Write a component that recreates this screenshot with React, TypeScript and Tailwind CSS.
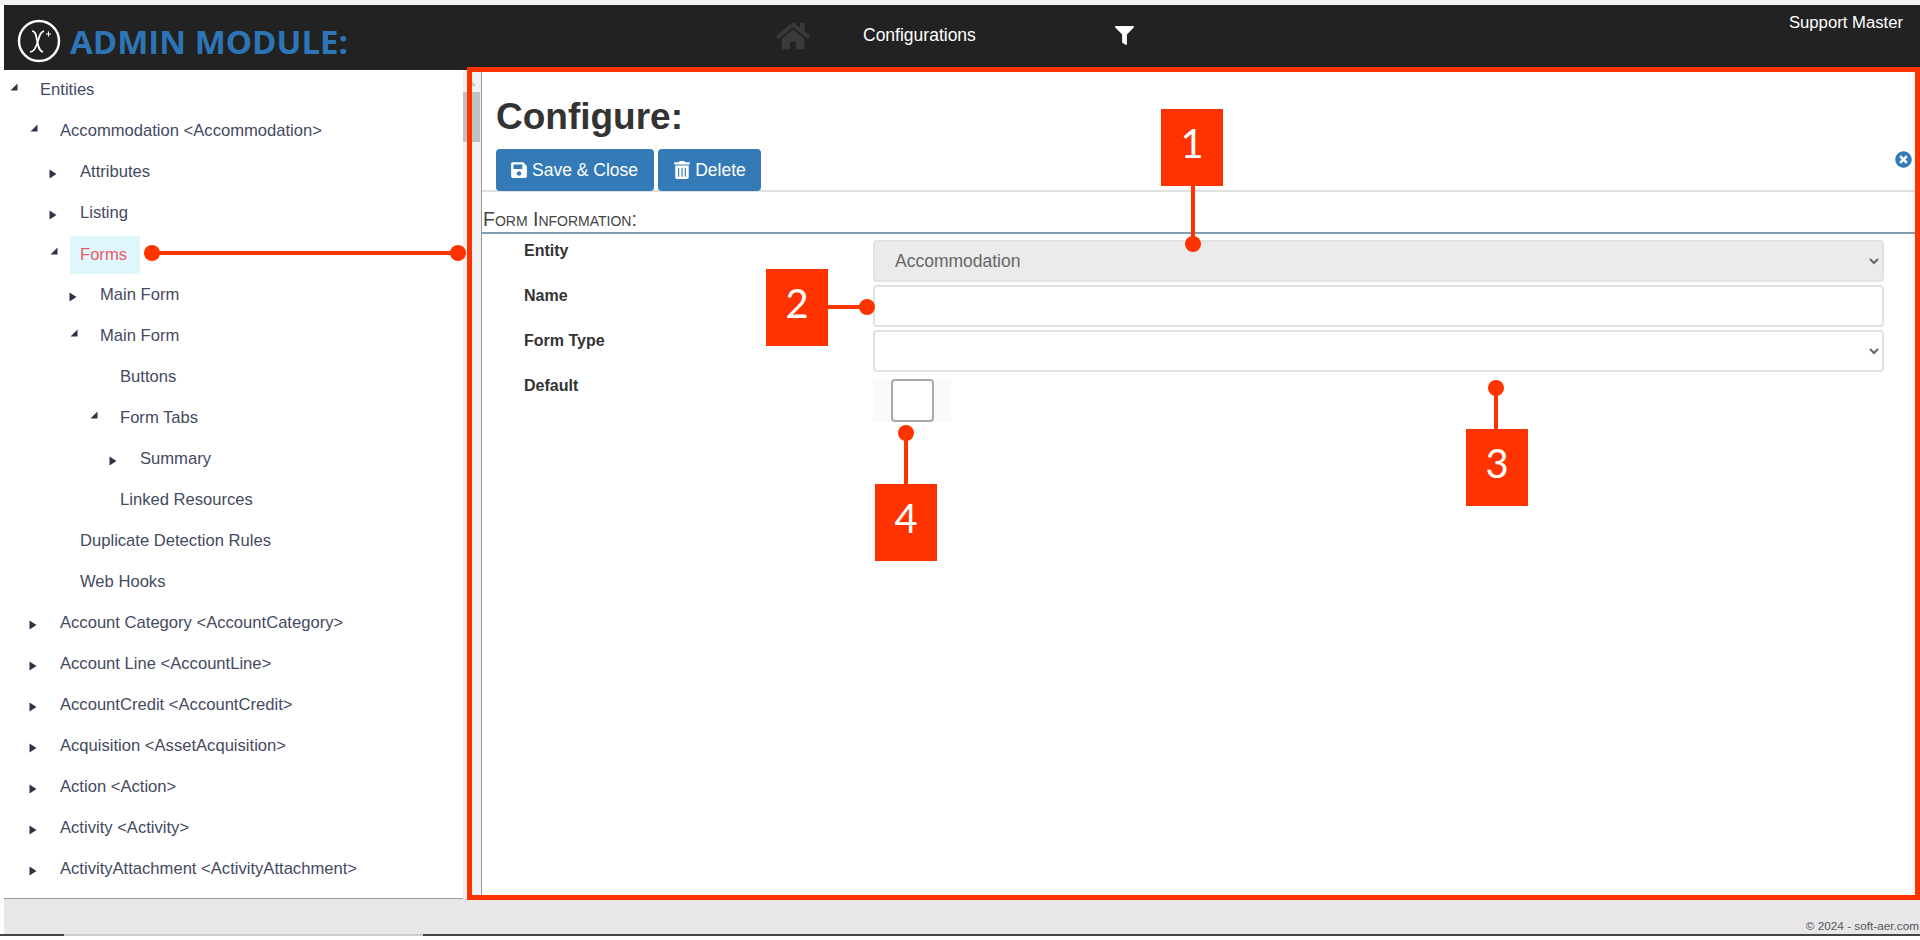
import { FaFilter, FaHome, FaSave, FaTimesCircle, FaTrashAlt } from 'react-icons/fa'

interface TreeRow {
  label: string
  level: number
  arrow?: 'open' | 'closed'
  active?: boolean
}

const rows: TreeRow[] = [
  { label: 'Entities', level: 0, arrow: 'open' },
  { label: 'Accommodation <Accommodation>', level: 1, arrow: 'open' },
  { label: 'Attributes', level: 2, arrow: 'closed' },
  { label: 'Listing', level: 2, arrow: 'closed' },
  { label: 'Forms', level: 2, arrow: 'open', active: true },
  { label: 'Main Form', level: 3, arrow: 'closed' },
  { label: 'Main Form', level: 3, arrow: 'open' },
  { label: 'Buttons', level: 4 },
  { label: 'Form Tabs', level: 4, arrow: 'open' },
  { label: 'Summary', level: 5, arrow: 'closed' },
  { label: 'Linked Resources', level: 4 },
  { label: 'Duplicate Detection Rules', level: 2 },
  { label: 'Web Hooks', level: 2 },
  { label: 'Account Category <AccountCategory>', level: 1, arrow: 'closed' },
  { label: 'Account Line <AccountLine>', level: 1, arrow: 'closed' },
  { label: 'AccountCredit <AccountCredit>', level: 1, arrow: 'closed' },
  { label: 'Acquisition <AssetAcquisition>', level: 1, arrow: 'closed' },
  { label: 'Action <Action>', level: 1, arrow: 'closed' },
  { label: 'Activity <Activity>', level: 1, arrow: 'closed' },
  { label: 'ActivityAttachment <ActivityAttachment>', level: 1, arrow: 'closed' },
]

const levelPadding = ['pl-[6px]', 'pl-[26px]', 'pl-[46px]', 'pl-[66px]', 'pl-[86px]', 'pl-[106px]']

const Logo = () => (
  <svg width="44" height="44" viewBox="0 0 44 44" fill="none" stroke="#fff">
    <circle cx="22" cy="22" r="20" strokeWidth="2.4" />
    <path d="M15 12c3 0 4 3 5 9s2 11 6 12" strokeWidth="1.7" />
    <path d="M13 33c3 0 6-4 8-11s3-9 6-10" strokeWidth="1.7" />
    <path d="M29 15h5M31.5 12.5v5" strokeWidth="1.1" />
  </svg>
)

const Arrow = ({ type }: { type?: 'open' | 'closed' }) => (
  <span className="w-[30px] shrink-0 flex items-center">
    {type === 'open' && (
      <svg width="8" height="8" viewBox="0 0 8 8" className="-mt-[8px]">
        <path d="M7.5 0.5V7.5H0.5Z" fill="#2d3447" />
      </svg>
    )}
    {type === 'closed' && (
      <svg width="8" height="10" viewBox="0 0 8 10" className="mt-[2px] ml-[-1px]">
        <path d="M0.5 0.5L7.5 5L0.5 9.5Z" fill="#2d3447" />
      </svg>
    )}
  </span>
)

const Sidebar = () => (
  <aside className="w-[459px] shrink-0 bg-white border-b border-b-[#999] overflow-hidden">
    {rows.map((row, i) => (
      <div key={i} className={`h-[41px] flex items-center ${levelPadding[row.level]}`}>
        <Arrow type={row.arrow} />
        {row.active ? (
          <span className="-ml-[10px] pl-[10px] pr-[13px] h-[38px] leading-[38px] bg-[#dff6fb] text-[#f0566a]">{row.label}</span>
        ) : (
          <span className="whitespace-nowrap">{row.label}</span>
        )}
      </div>
    ))}
  </aside>
)

const Scrollbar = () => (
  <div className="w-[19px] shrink-0 bg-[#f1f1f1] border-r border-r-[#999] pt-[22px] relative">
    <svg width="8" height="5" viewBox="0 0 8 5" className="absolute left-[5px] top-[11px]">
      <path d="M4 0L8 5H0Z" fill="#c8c8c8" />
    </svg>
    <div className="w-[17px] h-[50px] bg-[#c1c1c1]" />
  </div>
)

const FormRow = ({ label, children }: { label: string; children: React.ReactNode }) => (
  <div className="flex h-[45px]">
    <label className="w-[391px] pl-[42px] font-bold text-[#333] text-[16px] leading-[21px]">{label}</label>
    <div className="w-[1011px]">{children}</div>
  </div>
)

const fieldClass = 'w-full h-[42px] rounded-[4px] border-2 border-[#e2e2e2] px-[16px] text-[17.5px] text-[#666]'

const ConfigPanel = () => (
  <main className="flex-1 min-w-0 bg-white">
    <div className="pl-[14px] pr-[11px] pt-[27px] h-[122px] border-b-2 border-b-[#e0e0e0]">
      <h1 className="text-[37px] font-bold text-[#333] leading-[40px] mb-[12px]">Configure:</h1>
      <div className="flex items-end gap-[4px]">
        <button className="h-[42px] w-[158px] rounded-[4px] bg-[#337ab7] text-white text-[17.5px] flex items-center justify-center gap-[4px] pr-[2px]">
          <FaSave className="text-[18px]" /> Save &amp; Close
        </button>
        <button className="h-[42px] w-[103px] rounded-[4px] bg-[#337ab7] text-white text-[17.5px] flex items-center justify-center gap-[4px]">
          <FaTrashAlt className="text-[18px]" /> Delete
        </button>
        <FaTimesCircle className="ml-auto mb-[23px] mr-[-3px] text-[17px] text-[#337ab7]" />
      </div>
    </div>
    <div className="h-[42px] pl-[1px] pt-[16px] border-b-2 border-b-[#7f9db3] text-[#444] text-[19.5px] leading-[22px] [font-variant:small-caps]">
      Form Information:
    </div>
    <div className="pt-[6px]">
      <FormRow label="Entity">
        <select disabled className={`${fieldClass} bg-[#ebebeb] opacity-100`}>
          <option>Accommodation</option>
        </select>
      </FormRow>
      <FormRow label="Name">
        <input className={fieldClass} />
      </FormRow>
      <FormRow label="Form Type">
        <select className={`${fieldClass} bg-white`}>
          <option></option>
        </select>
      </FormRow>
      <FormRow label="Default">
        <div className="mt-[4px] w-[78px] h-[43px] bg-[#fafafa] flex justify-center">
          <input type="checkbox" className="appearance-none w-[43px] h-[43px] bg-white border-2 border-[#aaa] rounded-[4px]" />
        </div>
      </FormRow>
    </div>
  </main>
)

// 주석 번호 상자
const Callout = ({ n, className }: { n: number; className: string }) => (
  <div className={`absolute w-[62px] h-[77px] pb-[10px] bg-[#ff3300] text-white text-[40px] font-['Lato',sans-serif] flex items-center justify-center ${className}`}>
    {n}
  </div>
)

const Dot = ({ className }: { className: string }) => (
  <div className={`absolute w-[16px] h-[16px] rounded-full bg-[#ff3300] ${className}`} />
)

const Line = ({ className }: { className: string }) => <div className={`absolute bg-[#ff3300] ${className}`} />

export default function App() {
  return (
    <div className="relative w-[1920px] h-[940px] overflow-hidden bg-white text-[16.6px] text-[#444a5f] font-['Liberation_Sans',Arial,sans-serif]">
      <div className="h-[5px] bg-[#f2f2f2]" />
      <div className="flex flex-col h-[929px] pl-[4px]">
        <header className="h-[65px] shrink-0 bg-[#222] flex">
          <div className="flex items-center pl-[13px] w-[770px] pt-[7px]">
            <Logo />
            <span className="ml-[9px] text-[33px] font-bold text-[#2e75b6] leading-none font-['Open_Sans',sans-serif]">ADMIN MODULE:</span>
          </div>
          <FaHome className="mt-[14px] ml-[2px] text-[34px] text-[#3a3a3a]" />
          <span className="ml-[53px] mt-[20px] text-[17.5px] leading-[20px] text-white">Configurations</span>
          <FaFilter className="ml-[139px] mt-[21px] text-[19px] text-white" />
          <span className="ml-auto mr-[17px] mt-[8px] text-[16.7px] leading-[20px] text-white">Support Master</span>
        </header>
        <div className="flex h-[829px] shrink-0">
          <Sidebar />
          <Scrollbar />
          <ConfigPanel />
        </div>
        <footer className="flex-1 bg-[#e8e6e8] flex items-end justify-end pr-[1px] text-[11.75px] leading-[16px] text-[#555]">
          © 2024 - soft-aer.com
        </footer>
      </div>
      <div className="flex h-[2px]">
        <div className="w-[64px] bg-[#444]" />
        <div className="w-[359px] bg-[#ccc]" />
        <div className="flex-1 bg-[#444]" />
      </div>

      {/* 빨간 주석 레이어 */}
      <div className="absolute left-[467px] top-[67px] w-[1453px] h-[833px] border-[5px] border-[#ff3300]" />
      <Dot className="left-[144px] top-[245px]" />
      <Dot className="left-[450px] top-[245px]" />
      <Line className="left-[152px] top-[251px] w-[306px] h-[4px]" />

      <Callout n={1} className="left-[1161px] top-[109px]" />
      <Line className="left-[1191px] top-[186px] w-[4px] h-[57px]" />
      <Dot className="left-[1185px] top-[236px]" />

      <Callout n={2} className="left-[766px] top-[269px]" />
      <Line className="left-[828px] top-[305px] w-[39px] h-[4px]" />
      <Dot className="left-[859px] top-[299px]" />

      <Callout n={3} className="left-[1466px] top-[429px]" />
      <Line className="left-[1494px] top-[388px] w-[4px] h-[41px]" />
      <Dot className="left-[1488px] top-[380px]" />

      <Callout n={4} className="left-[875px] top-[484px]" />
      <Line className="left-[904px] top-[433px] w-[4px] h-[51px]" />
      <Dot className="left-[898px] top-[425px]" />
    </div>
  )
}
